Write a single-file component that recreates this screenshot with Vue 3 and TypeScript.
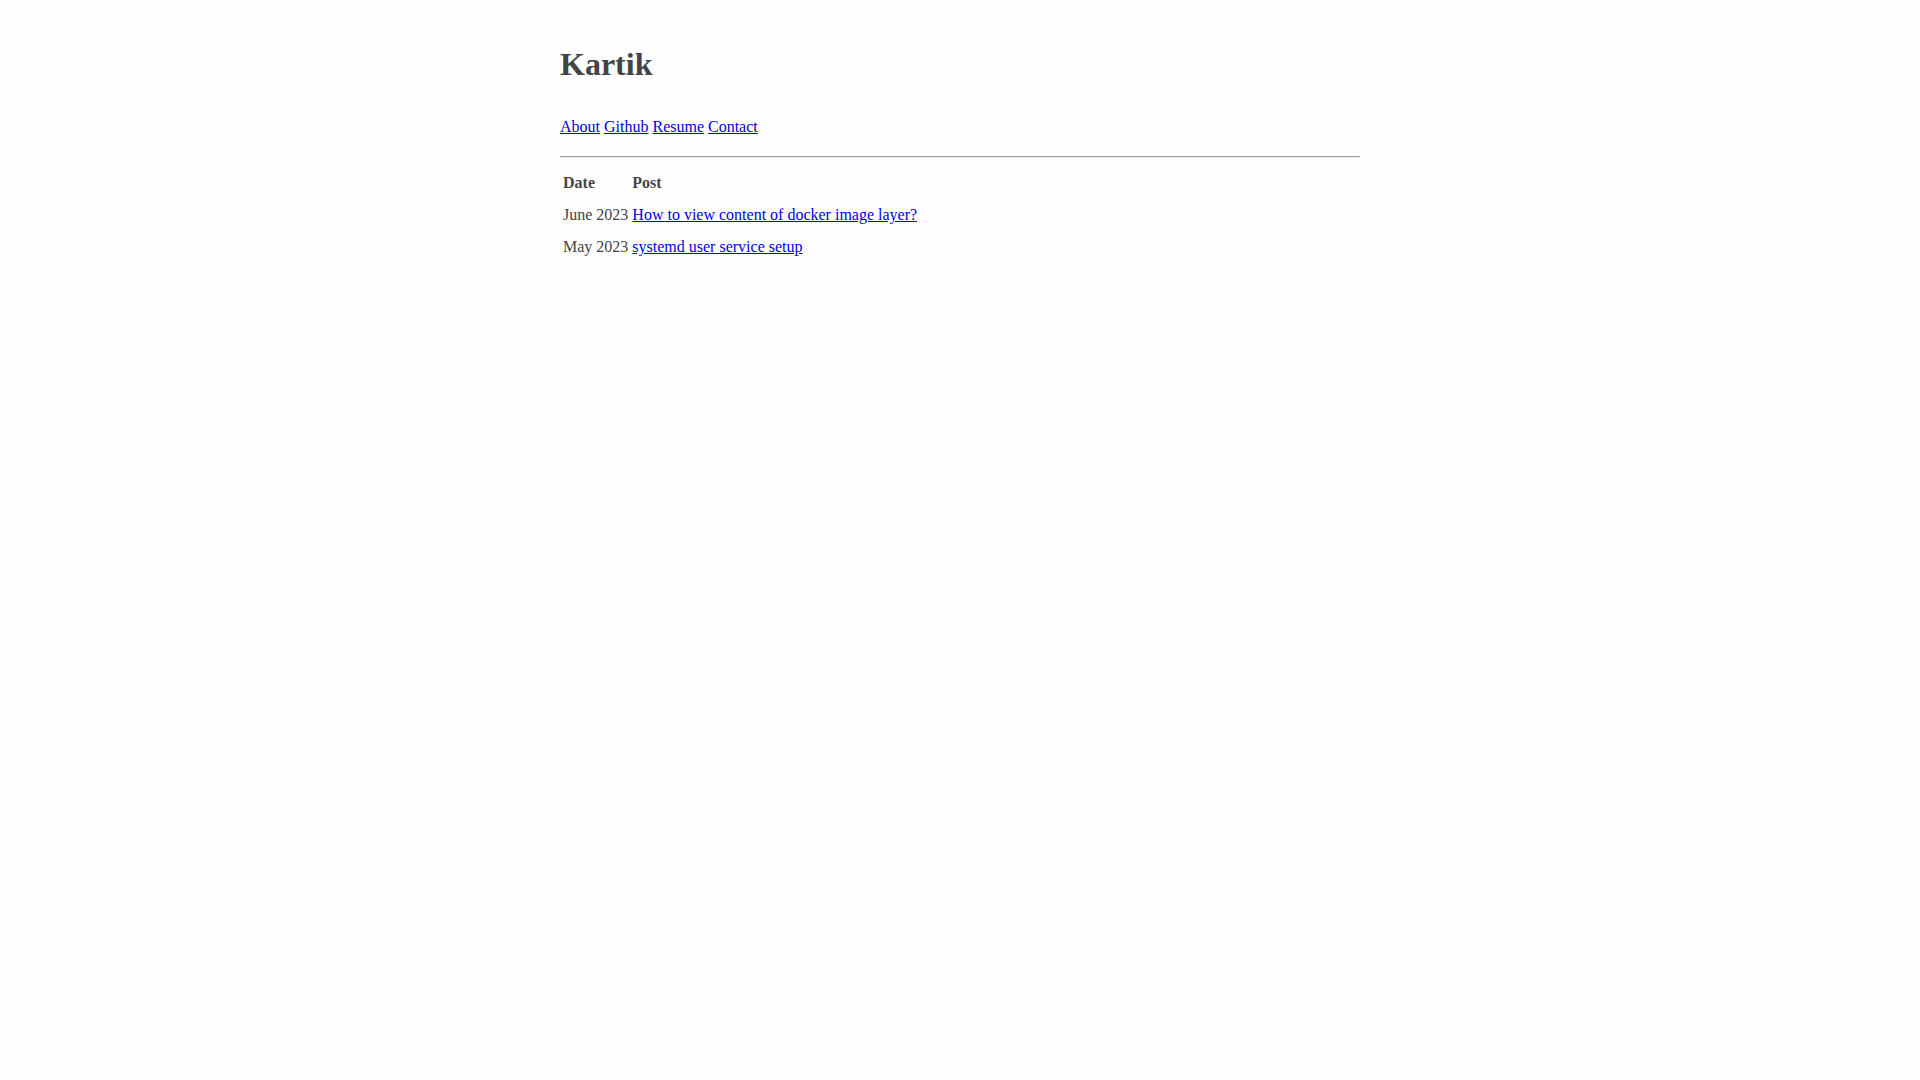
<script setup lang="ts">
interface NavLink {
  label: string
  href: string
}

interface Post {
  date: string
  title: string
  href: string
}

const links: NavLink[] = [
  { label: 'About', href: '#about' },
  { label: 'Github', href: '#github' },
  { label: 'Resume', href: '#resume' },
  { label: 'Contact', href: '#contact' },
]

const posts: Post[] = [
  { date: 'June 2023', title: 'How to view content of docker image layer?', href: '#docker-image-layer' },
  { date: 'May 2023', title: 'systemd user service setup', href: '#systemd-user-service' },
]
</script>

<template>
  <div class="page">
    <header>
      <h1>Kartik</h1>
      <nav>
        <a v-for="link in links" :key="link.label" :href="link.href">{{ link.label }}</a>
      </nav>
    </header>
    <hr />
    <main>
      <table>
        <thead>
          <tr>
            <th scope="col">Date</th>
            <th scope="col">Post</th>
          </tr>
        </thead>
        <tbody>
          <tr v-for="post in posts" :key="post.href">
            <td>{{ post.date }}</td>
            <td><a :href="post.href">{{ post.title }}</a></td>
          </tr>
        </tbody>
      </table>
    </main>
  </div>
</template>

<style>
body {
  margin: 0;
  background: #fefefe;
}
</style>

<style scoped>
.page {
  max-width: 800px;
  margin: 40px auto;
  font-family: "Liberation Serif", "Times New Roman", serif;
  font-size: 16px;
  line-height: 28px;
  color: #444;
}

h1 {
  margin: 0 0 24px;
  font-size: 32px;
  line-height: 48px;
}

nav {
  display: flex;
  flex-wrap: wrap;
  column-gap: 4px;
  line-height: 30px;
}

a {
  color: #0000ee;
  text-decoration: underline;
}

hr {
  margin: 14px 0 8px;
}

table {
  border-collapse: separate;
  border-spacing: 2px;
}

th,
td {
  padding: 1px;
  text-align: left;
}
</style>
